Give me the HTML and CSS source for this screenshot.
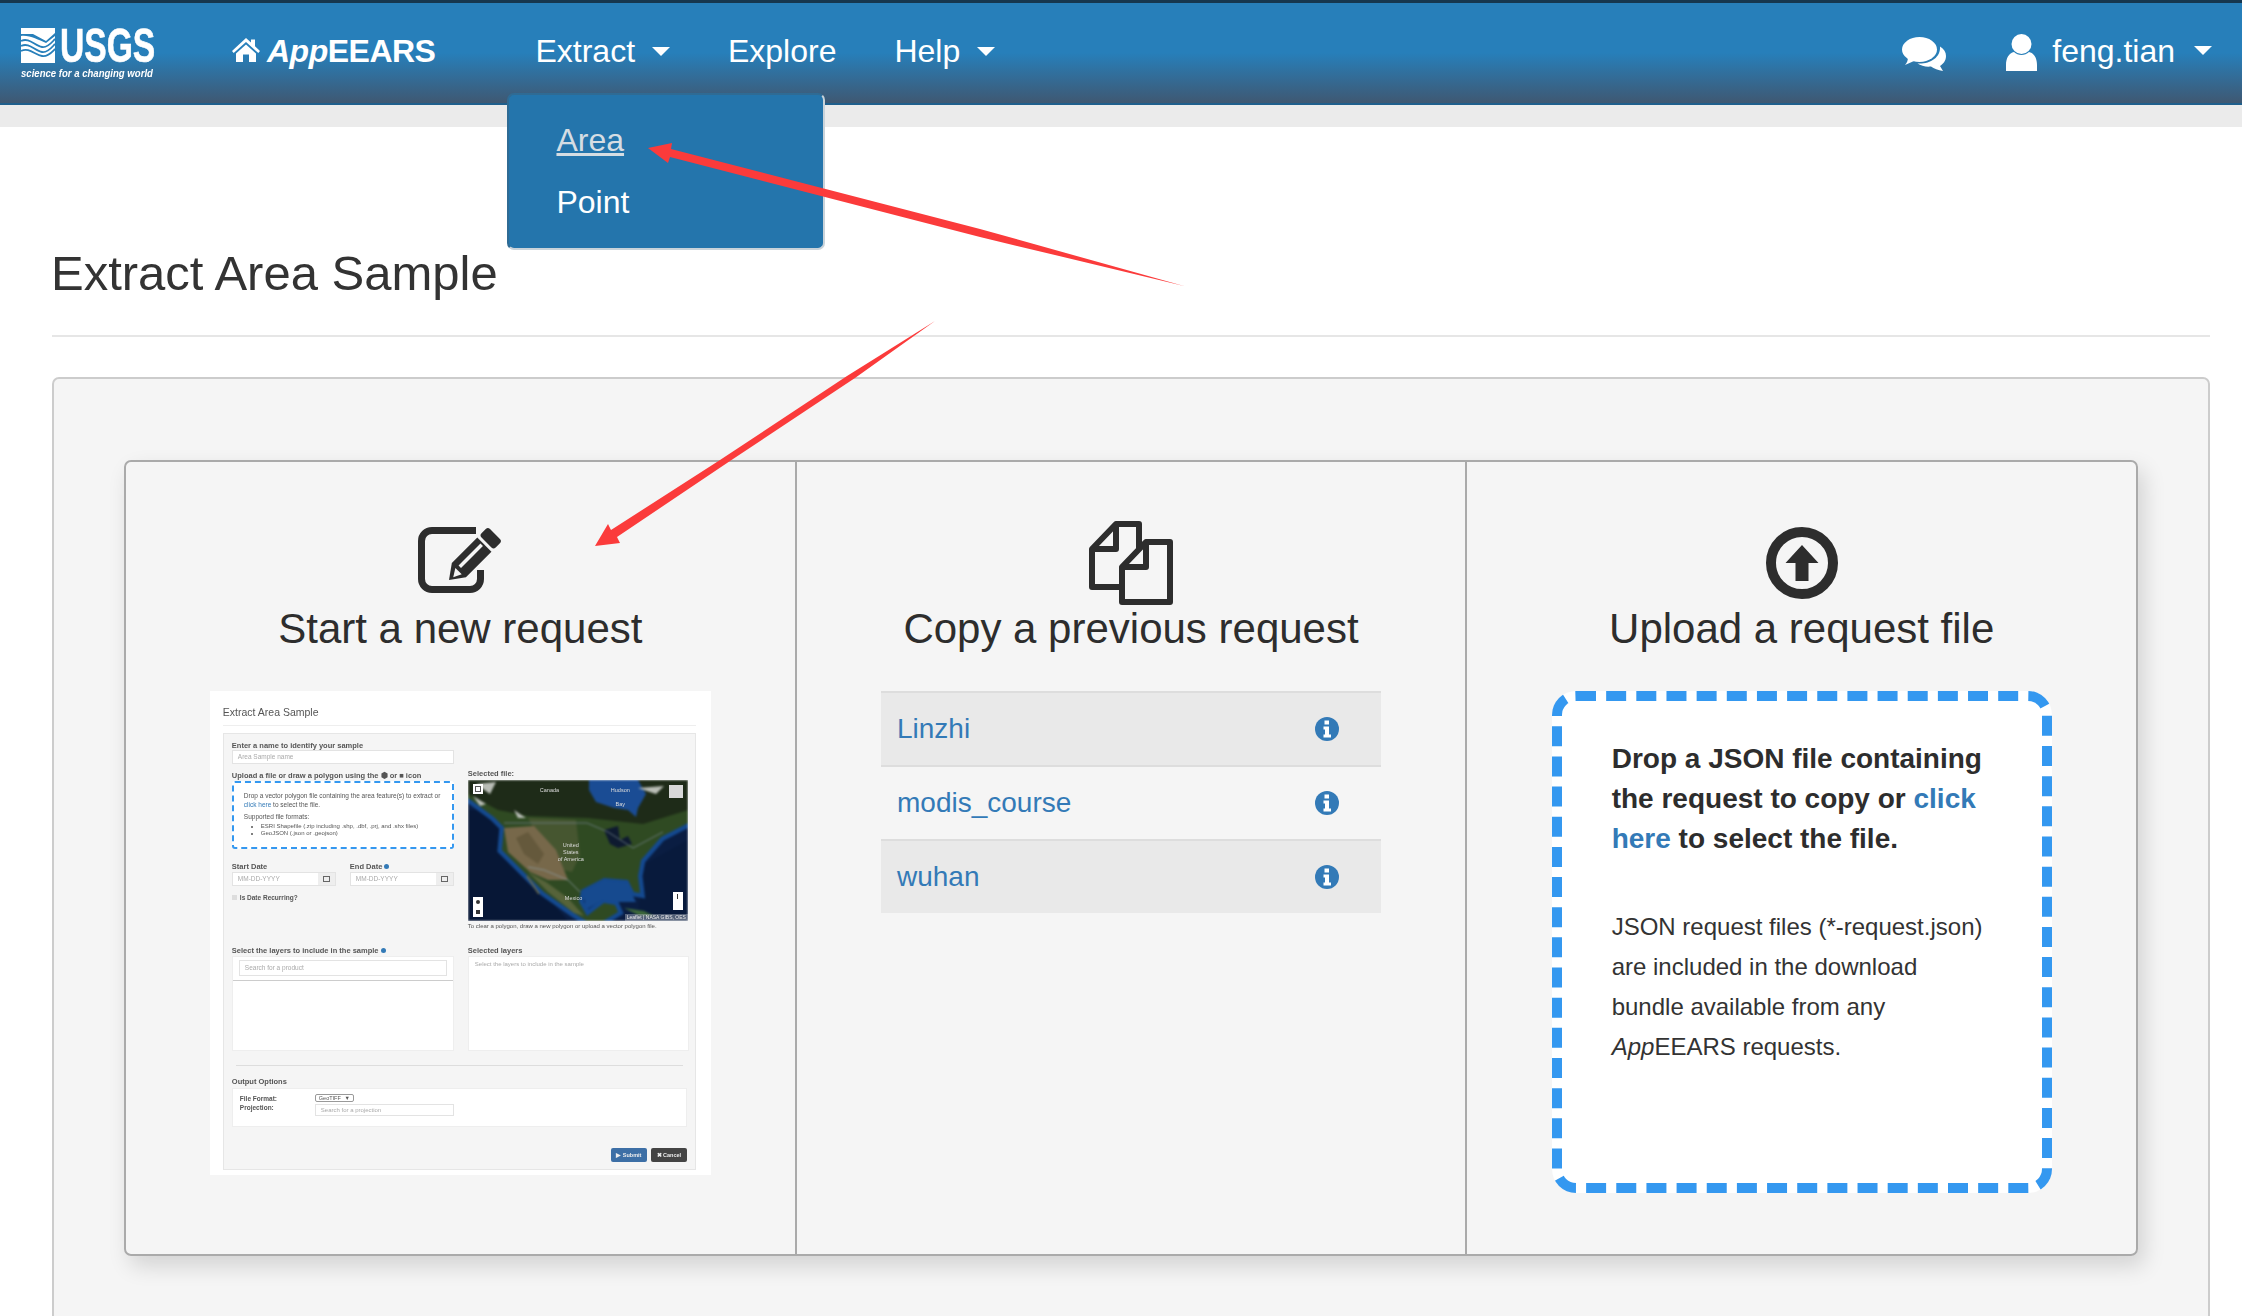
FILE: index.html
```html
<html>
  <head>
    <meta charset="utf-8" />
    <title>AppEEARS - Extract Area Sample</title>
    <link rel="stylesheet" href="styles.css">
  </head>
  <body>
    <nav class="navbar">
      <a class="usgs_logo">
        <span class="usgs_top">
          <svg class="usgs_emblem" viewBox="0 0 34 35" width="34" height="35">
            <rect width="34" height="35" fill="#fff"/>
            <path d="M0 6L12 6L25 13L34 5V8L25 15C17 12 9 7 0 8Z" fill="#277fba"/>
            <g fill="none" stroke="#277fba" stroke-width="1.800">
              <path d="M0 13C8 9 14 18 21 19C27 20 31 14 34 11"/>
              <path d="M0 18C8 14 14 23 21 24C27 25 31 19 34 16"/>
              <path d="M0 23C8 19 14 27 21 28C27 29 31 24 34 21"/>
            </g>
          </svg>
          <span class="usgs_word">USGS</span>
        </span>
        <span class="usgs_tag">science for a changing world</span>
      </a>
      <a class="brand">
        <svg class="home_icon" viewBox="0 0 28 24" width="28" height="24">
          <path d="M14 0L19 4.600V1.500H23V8.300L28 13L26.300 15L14 4L1.700 15L0 13Z M14 6.500L24 15.500V24H17V16.500H11V24H4V15.500Z" fill="#fff"/>
        </svg>
        <span><i>App</i>EEARS</span>
      </a>
      <ul class="nav_list">
        <li class="nav_item extract">Extract <span class="caret"></span>
          <div class="dropdown">
            <a class="active">Area</a>
            <a>Point</a>
          </div>
        </li>
        <li class="nav_item">Explore</li>
        <li class="nav_item">Help <span class="caret"></span></li>
      </ul>
      <div class="nav_right">
        <svg class="chat_icon" viewBox="0 0 44 34" width="44" height="34">
          <path d="M38 9.500C42 12 44 15 44 19C44 24 41 27 38 29L41 34C36 33 32 31.500 29 29.500C24 30 19 29 15.500 26.500C27 27.500 39 21 38 9.500Z" fill="#fff"/>
          <ellipse cx="17.500" cy="12.500" rx="17.500" ry="12.500" fill="#fff"/>
          <path d="M6 20L12 24L3 28C5 26 6 23 6 20Z" fill="#fff"/>
        </svg>
        <svg class="user_icon" viewBox="0 0 31 37" width="31" height="37">
          <circle cx="15.500" cy="10" r="10" fill="#fff"/>
          <path d="M8 18C12 22 19 22 23 18C28 19 31 24 31 31V37H0V31C0 24 3 19 8 18Z" fill="#fff"/>
        </svg>
        <span class="user_name">feng.tian</span>
        <span class="caret"></span>
      </div>
    </nav>
    <div class="sub_bar"></div>

    <main class="page">
      <h1 class="page_title">Extract Area Sample</h1>
      <hr class="title_rule" />
      <section class="well">
        <div class="choice_card">

          <div class="choice">
            <svg class="choice_icon" viewBox="0 0 85 84" width="85" height="84">
              <path d="M58 9.500H14A10.500 10.500 0 0 0 3.500 20V58A10.500 10.500 0 0 0 14 68.500H52A10.500 10.500 0 0 0 62.500 58V49" fill="none" stroke="#2d2d2d" stroke-width="7"/>
              <g transform="translate(31 59) rotate(-45)">
                <path d="M0 0L14 -10H50V10H14Z" fill="#2d2d2d"/>
                <rect x="17" y="-3.500" width="31" height="3.500" fill="#f5f5f5"/>
                <path d="M5 1L13 -4V5Z" fill="#f5f5f5"/>
                <rect x="53" y="-10" width="12" height="20" rx="3" fill="#2d2d2d"/>
              </g>
            </svg>
            <h3 class="choice_title">Start a new request</h3>
            <div class="thumb">
              <div class="thumb_title">Extract Area Sample</div>
              <div class="thumb_well">
                <div class="thumb_cols">
                  <div class="thumb_col">
                    <div class="t_label">Enter a name to identify your sample</div>
                    <div class="t_input">Area Sample name</div>
                    <div class="t_label upload_label">Upload a file or draw a polygon using the ⬢ or ■ icon</div>
                    <div class="t_drop">
                      <div>Drop a vector polygon file containing the area feature(s) to extract or <span class="t_link">click here</span> to select the file.</div>
                      <div class="t_formats">Supported file formats:</div>
                      <ul>
                        <li>ESRI Shapefile (.zip including .shp, .dbf, .prj, and .shx files)</li>
                        <li>GeoJSON (.json or .geojson)</li>
                      </ul>
                    </div>
                    <div class="t_dates">
                      <div>
                        <div class="t_label">Start Date</div>
                        <div class="t_date"><span>MM-DD-YYYY</span><b></b></div>
                      </div>
                      <div>
                        <div class="t_label">End Date <span class="t_dot"></span></div>
                        <div class="t_date"><span>MM-DD-YYYY</span><b></b></div>
                      </div>
                    </div>
                    <div class="t_check"><span></span>Is Date Recurring?</div>
                  </div>
                  <div class="thumb_col map_col">
                    <div class="t_label">Selected file:</div>
                    <div class="t_map">
                      <svg class="map_art" viewBox="0 0 220 141" width="220" height="141">
                        <rect width="220" height="141" fill="#0a1d42"/>
                        <path d="M0 30H30L60 95L100 141H0Z" fill="#071736"/>
                        <path d="M175 85L220 60V141H170Z" fill="#081a3c"/>
                        <!-- coastal shelf shows as a brighter blue band round the land -->
                        <path d="M0 0H220V43L193 57L173 80L170 96L172 113L166 112L160 100L136 98L113 110L111 122L119 136L136 123L147 125L150 132L135 141H119L106 133L76 112L54 90L34 70L36 47L26 37L3 20L0 18Z" fill="#2f4a22" stroke="#14498f" stroke-width="9"/>
                        <path d="M0 0H220V43L193 57L173 80L170 96L172 113L166 112L160 100L136 98L113 110L111 122L119 136L136 123L147 125L150 132L135 141H119L106 133L76 112L54 90L34 70L36 47L26 37L3 20L0 18Z" fill="#2f4a22"/>
                        <path d="M0 0H220V30L175 44L120 38L60 36L30 30L0 14Z" fill="#1e2b18"/>
                        <path d="M60 38L108 40L112 75L104 92L86 88Z" fill="#465630"/>
                        <path d="M36 48L66 46L88 70L100 100L80 100L62 92L40 72Z" fill="#77684a"/>
                        <path d="M48 58L60 52L76 74L70 84L56 74Z" fill="#65593c"/>
                        <path d="M60 92L78 102L100 118L116 136L106 133L80 112Z" fill="#56633a"/>
                        <path d="M121 0H170L178 14L170 28L168 37L160 30L146 28L128 22L121 10Z" fill="#1a4c94"/>
                        <path d="M115 112L136 101L160 103L164 114L168 122L150 122L134 120L118 130Z" fill="#164a8f"/>
                        <path d="M136 50L150 46L152 60L160 56L164 64L150 68L142 64Z" fill="#0e1a30"/>
                        <path d="M156 128L176 131L186 136L170 135Z" fill="#3e6a3a"/>
                        <path d="M60 96L72 114L70 114L58 96Z" fill="#6d6a48"/>
                        <path d="M8 4L28 2L22 14Z M5 16L18 24L12 26Z M46 30L58 38L50 38Z M170 8L196 6L188 14Z" fill="#b9bdb6"/>
                        <path d="M36 43H119L140 52L165 68L195 52" fill="none" stroke="#71828a" stroke-width="0.800"/>
                        <path d="M60 87L76 90L100 100L112 112" fill="none" stroke="#8b9aa0" stroke-width="0.800"/>
                      </svg>
                      <span class="m_text m_canada">Canada</span>
                      <span class="m_text m_hudson">Hudson<br><br>Bay</span>
                      <span class="m_text m_usa">United<br>States<br>of America</span>
                      <span class="m_text m_mexico">Mexico</span>
                      <span class="m_ctl m_full"></span>
                      <span class="m_ctl m_layers"></span>
                      <span class="m_ctl m_draw"></span>
                      <span class="m_ctl m_zoom"></span>
                      <span class="m_attrib">Leaflet | NASA GIBS, OES</span>
                    </div>
                    <div class="t_caption">To clear a polygon, draw a new polygon or upload a vector polygon file.</div>
                  </div>
                </div>
                <div class="thumb_cols layers_row">
                  <div class="thumb_col">
                    <div class="t_label">Select the layers to include in the sample <span class="t_dot"></span></div>
                    <div class="t_panel">
                      <div class="t_search_row"><div class="t_input">Search for a product</div></div>
                    </div>
                  </div>
                  <div class="thumb_col">
                    <div class="t_label">Selected layers</div>
                    <div class="t_panel t_hint">Select the layers to include in the sample</div>
                  </div>
                </div>
                <hr class="t_rule" />
                <div class="t_label">Output Options</div>
                <div class="t_output">
                  <div class="t_output_row">
                    <div class="t_key">File Format:</div>
                    <div class="t_select">GeoTIFF <i>▼</i></div>
                  </div>
                  <div class="t_output_row">
                    <div class="t_key">Projection:</div>
                    <div class="t_input t_proj">Search for a projection</div>
                  </div>
                </div>
                <div class="t_buttons">
                  <span class="t_btn submit">▶ Submit</span>
                  <span class="t_btn cancel">✖ Cancel</span>
                </div>
              </div>
            </div>
          </div>

          <div class="choice">
            <svg class="choice_icon" viewBox="0 0 84 84" width="84" height="84">
              <g fill="none" stroke="#2d2d2d" stroke-width="6" stroke-linejoin="round">
                <path d="M30 66H3V28L27 3H50V27"/>
                <path d="M27 3V28H3"/>
                <path d="M57 21H81V81H33V46Z"/>
                <path d="M57 21V46H33"/>
              </g>
            </svg>
            <h3 class="choice_title">Copy a previous request</h3>
            <ul class="request_list">
              <li class="request_row"><a>Linzhi</a>
                <svg viewBox="0 0 24 24" width="24" height="24"><circle cx="12" cy="12" r="12" fill="#337ab7"/><path d="M9.500 3.500H14V7.500H9.500Z M8.500 9.500H14V17.500H16V20.500H8.500V17.500H10V12.500H8.500Z" fill="#fff"/></svg>
              </li>
              <li class="request_row"><a>modis_course</a>
                <svg viewBox="0 0 24 24" width="24" height="24"><circle cx="12" cy="12" r="12" fill="#337ab7"/><path d="M9.500 3.500H14V7.500H9.500Z M8.500 9.500H14V17.500H16V20.500H8.500V17.500H10V12.500H8.500Z" fill="#fff"/></svg>
              </li>
              <li class="request_row"><a>wuhan</a>
                <svg viewBox="0 0 24 24" width="24" height="24"><circle cx="12" cy="12" r="12" fill="#337ab7"/><path d="M9.500 3.500H14V7.500H9.500Z M8.500 9.500H14V17.500H16V20.500H8.500V17.500H10V12.500H8.500Z" fill="#fff"/></svg>
              </li>
            </ul>
          </div>

          <div class="choice">
            <svg class="choice_icon" viewBox="0 0 84 84" width="84" height="84">
              <circle cx="42" cy="42" r="31" fill="none" stroke="#2d2d2d" stroke-width="10"/>
              <path d="M42 24L58.500 42H48.500V60H35.500V42H25.500Z" fill="#2d2d2d"/>
            </svg>
            <h3 class="choice_title">Upload a request file</h3>
            <div class="drop_zone">
              <p class="drop_lead">Drop a JSON file containing the request to copy or <a>click</a> <a>here</a> to select the file.</p>
              <p class="drop_note">JSON request files (*-request.json) are included in the download bundle available from any <i>App</i>EEARS requests.</p>
            </div>
          </div>

        </div>
      </section>
    </main>

    <!-- the two red annotation arrows sit on top of the page -->
    <svg class="arrows" viewBox="0 0 2242 1316" width="2242" height="1316">
      <path d="M648 148L672 143L671 149L980 229L1184 286L980 237L670 157L668 163Z" fill="#fb3b3b"/>
      <path d="M595 546L608 524L611 530L720 460L847 376L935 321L855 378L730 461L617 537L620 543Z" fill="#fb3b3b"/>
    </svg>
  </body>
</html>
```

FILE: styles.css
```css
body {
  margin: 0;
  height: 100vh;
  overflow: hidden;
  background: #fff;
  color: #333;
  font-family: "Liberation Sans", Arial, sans-serif;
  font-size: 24px;
}
a {
  color: inherit;
}

/* top bar */
.navbar {
  display: flex;
  align-items: flex-start;
  box-sizing: border-box;
  height: 105px;
  padding: 0 30px 0 21px;
  border-top: 3px solid #16374f;
  border-bottom: 2px solid #1f5f8c;
  background: linear-gradient(#277fba 0%, #277fba 50%, #3f5872 100%);
  color: #fff;
}
.sub_bar {
  height: 22px;
  background: #ebebeb;
}
.usgs_logo {
  display: flex;
  flex-direction: column;
  width: 190px;
  padding-top: 25px;
}
.usgs_top {
  display: flex;
  height: 35px;
}
.usgs_word {
  display: inline-block;
  margin-left: 5px;
  font-size: 48px;
  font-weight: bold;
  line-height: 35px;
  -webkit-text-stroke: 0.6px #fff;
  transform: scaleX(0.7);
  transform-origin: left center;
}
.usgs_tag {
  display: inline-block;
  margin-top: 4px;
  font-size: 11px;
  font-weight: bold;
  font-style: italic;
  white-space: nowrap;
  transform: scaleX(0.87);
  transform-origin: left center;
}
.brand {
  display: flex;
  align-items: center;
  gap: 7px;
  margin-left: 21px;
  padding-top: 30px;
  font-size: 32px;
  font-weight: bold;
  line-height: 36px;
  letter-spacing: -0.5px;
}
.home_icon {
  margin-top: -2px;
}
.nav_list {
  display: flex;
  gap: 58px;
  margin: 0 0 0 100px;
  padding: 30px 0 0;
  list-style: none;
  font-size: 32px;
  line-height: 36px;
}
.nav_item {
  position: relative;
}
.caret {
  display: inline-block;
  width: 0;
  height: 0;
  margin-left: 8px;
  border-top: 9px solid #fff;
  border-left: 9.500px solid transparent;
  border-right: 9.500px solid transparent;
  vertical-align: 6px;
}
.dropdown {
  position: absolute;
  top: 60px;
  left: -28px;
  z-index: 2;
  display: flex;
  flex-direction: column;
  gap: 26px;
  box-sizing: border-box;
  width: 318px;
  height: 157px;
  padding: 27px 47px;
  border: 2px solid #2f6b94;
  border-bottom-color: #c9d3da;
  border-right-color: #c9d3da;
  border-radius: 7px;
  background: #2475ac;
}
.dropdown .active {
  color: #d5dde3;
  text-decoration: underline;
}
.nav_right {
  display: flex;
  align-items: flex-start;
  margin-left: auto;
  padding-top: 31px;
  font-size: 32px;
  line-height: 36px;
}
.chat_icon {
  margin: 3px 60px 0 0;
}
.user_name {
  margin: -1px 11px 0 15px;
}
.nav_right .caret {
  margin-top: 12px;
}

/* page */
.page {
  padding: 0 32px 0 52px;
}
.page_title {
  margin: 0 0 0 -1px;
  padding-top: 120px;
  font-size: 49px;
  font-weight: 400;
  line-height: 53px;
}
.title_rule {
  margin: 35px 0 40px;
  border: 0;
  border-top: 2px solid #e6e6e6;
}
.well {
  box-sizing: border-box;
  height: 1000px;
  padding: 81px 70px;
  border: 2px solid #ccc;
  border-radius: 7px;
  background: #f5f5f5;
}
.choice_card {
  display: flex;
  box-sizing: border-box;
  height: 796px;
  border: 2px solid #aaa;
  border-radius: 7px;
  box-shadow: 6px 10px 22px rgba(0, 0, 0, 0.14);
}
.choice {
  display: flex;
  flex: 1;
  flex-direction: column;
  align-items: center;
  padding-top: 59px;
  border-left: 2px solid #aaa;
}
.choice:first-child {
  border-left: 0;
}
.choice_icon {
  display: block;
}
.choice_title {
  margin: 1px 0 39px;
  color: #2d2d2d;
  font-size: 42px;
  font-weight: 400;
  line-height: 46px;
}

/* previous requests */
.request_list {
  box-sizing: border-box;
  width: 500px;
  margin: 0;
  padding: 0;
  list-style: none;
}
.request_row {
  display: flex;
  align-items: center;
  justify-content: space-between;
  box-sizing: border-box;
  height: 74px;
  padding: 0 42px 0 16px;
  border-top: 2px solid #ddd;
  font-size: 28px;
  color: #337ab7;
}
.request_row:nth-child(odd) {
  background: #e9e9e9;
}

/* upload box */
.drop_zone {
  box-sizing: border-box;
  width: 500px;
  height: 502px;
  padding: 38px 52px 0 50px;
  border: 10px dashed #3498f0;
  border-radius: 24px;
  background: #fff;
}
.drop_lead {
  margin: 0;
  color: #2d2d2d;
  font-size: 28px;
  font-weight: bold;
  line-height: 40px;
}
.drop_lead a {
  color: #337ab7;
}
.drop_note {
  margin: 48px 0 0;
  color: #333;
  font-size: 24px;
  line-height: 40px;
}

/* little picture of the area form */
.thumb {
  box-sizing: border-box;
  width: 501px;
  height: 484px;
  padding: 14px 15px 5px 13px;
  background: #fff;
  color: #555;
  font-size: 7px;
  filter: blur(0.4px);
}
.thumb_title {
  padding-bottom: 6px;
  border-bottom: 1px solid #eee;
  font-size: 10.500px;
  line-height: 14px;
}
.thumb_well {
  box-sizing: border-box;
  height: 437px;
  margin-top: 7px;
  padding: 7px 8px 6px;
  border: 1px solid #e6e6e6;
  background: #f5f5f5;
}
.thumb_cols {
  display: grid;
  grid-template-columns: 222px 221px;
  column-gap: 14px;
}
.map_col {
  padding-top: 28px;
}
.layers_row {
  margin-top: 17px;
}
.t_label {
  font-size: 7.500px;
  font-weight: bold;
  line-height: 9px;
  white-space: nowrap;
}
.t_input {
  box-sizing: border-box;
  height: 14px;
  padding-left: 5px;
  border: 1px solid #e3e3e3;
  background: #fff;
  color: #aaa;
  font-size: 6.500px;
  line-height: 12px;
}
.upload_label {
  margin-top: 7px;
}
.t_drop {
  box-sizing: border-box;
  height: 68px;
  margin-top: 1px;
  padding: 8px 10px;
  border: 2px dashed #3498f0;
  border-radius: 3px;
  background: #fff;
  font-size: 6.500px;
  line-height: 9px;
}
.t_link {
  color: #337ab7;
}
.t_formats {
  margin-top: 3px;
}
.t_drop ul {
  margin: 2px 0 0;
  padding-left: 17px;
  font-size: 6px;
  line-height: 7px;
}
.t_dates {
  display: grid;
  grid-template-columns: 104px 104px;
  column-gap: 14px;
  margin-top: 13px;
}
.t_date {
  display: flex;
  justify-content: space-between;
  box-sizing: border-box;
  height: 14px;
  margin-top: 1px;
  padding-left: 5px;
  border: 1px solid #e3e3e3;
  background: #fff;
  color: #aaa;
  font-size: 6.500px;
  line-height: 12px;
}
.t_date b {
  display: flex;
  align-items: center;
  justify-content: center;
  width: 17px;
  background: #eee;
}
.t_date b::after {
  content: "";
  width: 5px;
  height: 4px;
  border: 1px solid #666;
}
.t_dot {
  display: inline-block;
  width: 5px;
  height: 5px;
  border-radius: 50%;
  background: #337ab7;
}
.t_check {
  margin-top: 8px;
  font-size: 6.500px;
  font-weight: bold;
}
.t_check span {
  display: inline-block;
  width: 5px;
  height: 5px;
  margin-right: 3px;
  background: #ddd;
}
.t_map {
  position: relative;
  width: 220px;
  height: 141px;
  margin-top: 2px;
  overflow: hidden;
}
.map_art {
  display: block;
  filter: blur(1.3px);
}
.t_caption {
  margin-top: 2px;
  font-size: 6px;
  white-space: nowrap;
}
.m_text {
  position: absolute;
  color: #ddd;
  font-size: 5.500px;
  line-height: 7px;
  text-align: center;
}
.m_canada { left: 72px; top: 7px; }
.m_hudson { left: 143px; top: 7px; }
.m_usa { left: 90px; top: 62px; }
.m_mexico { left: 97px; top: 115px; }
.m_ctl {
  position: absolute;
  background: #fff;
}
.m_full {
  left: 5px;
  top: 4px;
  width: 10px;
  height: 10px;
  box-shadow: inset 0 0 0 2px #fff, inset 0 0 0 3px #555;
}
.m_layers { right: 5px; top: 5px; width: 14px; height: 13px; background: #d8d8d8; }
.m_draw {
  display: flex;
  flex-direction: column;
  align-items: center;
  justify-content: space-around;
  left: 5px;
  bottom: 4px;
  width: 10px;
  height: 20px;
}
.m_draw::before {
  content: "";
  width: 4px;
  height: 4px;
  border-radius: 50%;
  background: #333;
}
.m_draw::after {
  content: "";
  width: 4px;
  height: 4px;
  background: #333;
}
.m_zoom {
  display: flex;
  justify-content: center;
  right: 5px;
  bottom: 11px;
  width: 10px;
  height: 18px;
}
.m_zoom::before {
  content: "";
  width: 1px;
  height: 5px;
  margin-top: 2px;
  background: #333;
}
.m_attrib {
  position: absolute;
  right: 0;
  bottom: 0;
  padding: 0 2px;
  background: rgba(255, 255, 255, 0.3);
  color: #eee;
  font-size: 5px;
  line-height: 7px;
}
.t_panel {
  box-sizing: border-box;
  height: 95px;
  margin-top: 1px;
  border: 1px solid #eee;
  background: #fff;
}
.t_search_row {
  padding: 3px 6px 4px;
  border-bottom: 1px solid #ccc;
}
.t_search_row .t_input {
  height: 16px;
  line-height: 14px;
}
.t_hint {
  padding: 4px 6px;
  color: #aaa;
  font-size: 6px;
}
.t_rule {
  margin: 14px 4px 11px;
  border: 0;
  border-top: 1px solid #ddd;
}
.t_output {
  box-sizing: border-box;
  height: 39px;
  margin-top: 2px;
  padding: 5px 7px;
  border: 1px solid #eee;
  background: #fff;
  font-size: 6.500px;
}
.t_output_row {
  display: flex;
}
.t_key {
  width: 75px;
  font-weight: bold;
  line-height: 9px;
}
.t_select {
  display: flex;
  justify-content: space-between;
  box-sizing: border-box;
  width: 39px;
  height: 8px;
  padding: 0 3px;
  border: 1px solid #999;
  border-radius: 2px;
  font-size: 5.500px;
  line-height: 6px;
}
.t_select i {
  font-style: normal;
}
.t_proj {
  width: 139px;
  height: 12px;
  margin-top: 1px;
  font-size: 6px;
  line-height: 10px;
}
.t_buttons {
  display: flex;
  justify-content: flex-end;
  gap: 4px;
  margin-top: 21px;
}
.t_btn {
  box-sizing: border-box;
  width: 36px;
  height: 14px;
  border-radius: 2px;
  color: #eee;
  font-size: 5.500px;
  font-weight: bold;
  line-height: 14px;
  text-align: center;
}
.submit {
  background: #3d6fa6;
}
.cancel {
  background: #444;
}

.arrows {
  position: absolute;
  top: 0;
  left: 0;
  z-index: 5;
  pointer-events: none;
}
```
